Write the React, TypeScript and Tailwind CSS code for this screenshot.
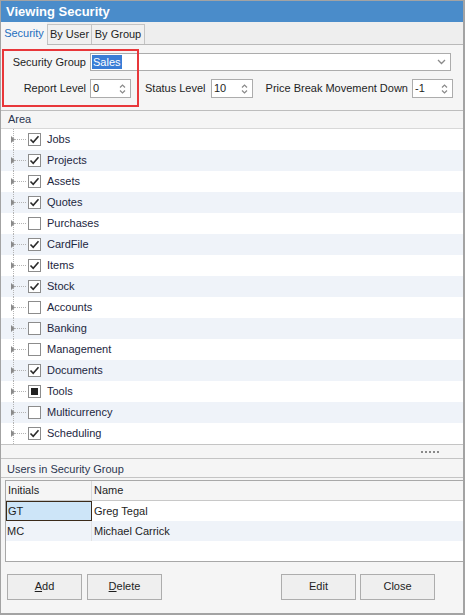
import React from 'react';

type CheckState = 'on' | 'off' | 'mixed';

const AREAS: { name: string; state: CheckState }[] = [
  { name: 'Jobs', state: 'on' },
  { name: 'Projects', state: 'on' },
  { name: 'Assets', state: 'on' },
  { name: 'Quotes', state: 'on' },
  { name: 'Purchases', state: 'off' },
  { name: 'CardFile', state: 'on' },
  { name: 'Items', state: 'on' },
  { name: 'Stock', state: 'on' },
  { name: 'Accounts', state: 'off' },
  { name: 'Banking', state: 'off' },
  { name: 'Management', state: 'off' },
  { name: 'Documents', state: 'on' },
  { name: 'Tools', state: 'mixed' },
  { name: 'Multicurrency', state: 'off' },
  { name: 'Scheduling', state: 'on' },
];

const USERS = [
  { initials: 'GT', name: 'Greg Tegal' },
  { initials: 'MC', name: 'Michael Carrick' },
];

const Spinner = ({ value, width }: { value: string; width: string }) => (
  <div className={`${width} h-[19px] shrink-0 bg-white border border-[#acacac] flex items-center justify-between pl-[2px] pr-[4px]`}>
    <span>{value}</span>
    <svg width="7" height="12" viewBox="0 0 7 12">
      <path d="M1 4.5 L3.5 2 L6 4.5" fill="none" stroke="#8a8a8a" strokeWidth="1.2" />
      <path d="M1 7.5 L3.5 10 L6 7.5" fill="none" stroke="#8a8a8a" strokeWidth="1.2" />
    </svg>
  </div>
);

const Check = ({ state }: { state: CheckState }) => (
  <div className="w-[13px] h-[13px] shrink-0 border border-[#8c8c8c] bg-white flex items-center justify-center">
    {state === 'on' && (
      <svg width="11" height="11" viewBox="0 0 11 11">
        <path d="M1.5 5.5 L4.2 8.3 L9.5 2.2" fill="none" stroke="#2b2b2b" strokeWidth="1.6" />
      </svg>
    )}
    {state === 'mixed' && <div className="w-[7px] h-[7px] bg-[#222]" />}
  </div>
);

const TreeRow = ({ name, state, alt }: { name: string; state: CheckState; alt: boolean }) => (
  <div className={`h-[21px] flex items-center ${alt ? 'bg-[#eff3f9]' : 'bg-white'}`}>
    <svg width="27" height="21" viewBox="0 0 27 21" className="shrink-0">
      <line x1="12.5" y1="0" x2="12.5" y2="21" stroke="#b4b4b4" strokeDasharray="1 1" />
      <line x1="14" y1="10.5" x2="26" y2="10.5" stroke="#b4b4b4" strokeDasharray="1 1" />
      <path d="M10 7 L14 10.5 L10 14 Z" fill="#8a8a8a" />
    </svg>
    <Check state={state} />
    <span className="ml-[6px] text-[#1c2640]">{name}</span>
  </div>
);

export default function App() {
  return (
    <div
      className="relative w-[465px] h-[615px] bg-[#f5f5f5] border-t border-l border-r-2 border-b-2 border-[#a3a3a3] flex flex-col text-[11px] text-[#1e1e1e] overflow-hidden whitespace-nowrap"
      style={{ fontFamily: '"Liberation Sans", Arial, sans-serif' }}
    >
      {/* title bar */}
      <div className="h-[21px] bg-[#4a8cca] text-white font-bold text-[13px] flex items-center pl-[5px] shrink-0">
        Viewing Security
      </div>

      {/* tabs */}
      <div className="h-[23px] bg-[#eeeeee] border-b border-[#b9b9b9] flex items-end shrink-0">
        <div className="w-[46px] h-[23px] flex items-center justify-center bg-[#f5f5f5] text-[#1f6fbf] -mb-px">Security</div>
        <div className="w-[45px] h-[20px] flex items-center justify-center border border-b-0 border-[#c4c4c4] bg-[#f0f0f0]">By User</div>
        <div className="w-[53px] h-[20px] flex items-center justify-center border border-b-0 border-l-0 border-[#c4c4c4] bg-[#f0f0f0]">By Group</div>
      </div>

      {/* form */}
      <div className="h-[65px] flex flex-col gap-[8px] pt-[8px] shrink-0">
        <div className="flex items-center">
          <div className="w-[89px] text-right pr-[4px] shrink-0">Security Group</div>
          <div className="w-[361px] h-[18px] bg-white border border-[#acacac] flex items-center justify-between pl-px pr-[4px]">
            <span className="bg-[#3a7dd6] text-white px-px leading-[14px]">Sales</span>
            <svg width="9" height="6" viewBox="0 0 9 6">
              <path d="M1 1 L4.5 4.5 L8 1" fill="none" stroke="#8a8a8a" strokeWidth="1.3" />
            </svg>
          </div>
        </div>
        <div className="flex items-center">
          <div className="w-[89px] text-right pr-[4px] shrink-0">Report Level</div>
          <Spinner value="0" width="w-[41px]" />
          <div className="w-[80px] pl-[14px] shrink-0">Status Level</div>
          <Spinner value="10" width="w-[42px]" />
          <div className="w-[159px] text-right pr-[4px] shrink-0">Price Break Movement Down</div>
          <Spinner value="-1" width="w-[41px]" />
        </div>
      </div>

      {/* red highlight */}
      <div className="absolute left-[1px] top-[48px] w-[137px] h-[58px] border-2 border-[#e8373a] pointer-events-none" />

      {/* area tree */}
      <div className="border-t border-[#bdbdbd] shrink-0">
        <div className="h-[18px] flex items-center pl-[7px] text-[#2c3550] border-b border-[#d8d8d8]">Area</div>
        <div className="bg-white">
          {AREAS.map((a, i) => (
            <TreeRow key={a.name} name={a.name} state={a.state} alt={i % 2 === 1} />
          ))}
        </div>
      </div>

      {/* splitter strip */}
      <div className="h-[15px] border-t border-b border-[#c4c4c4] flex items-center justify-end pr-[24px] shrink-0">
        <div className="flex gap-[2px]">
          {[0, 1, 2, 3, 4].map((d) => (
            <div key={d} className="w-[2px] h-[2px] bg-[#8a8a8a]" />
          ))}
        </div>
      </div>

      {/* users in group */}
      <div className="h-[19px] flex items-center pt-[3px] pl-[6px] text-[#2c3550] border-b border-[#c4c4c4] shrink-0">
        Users in Security Group
      </div>
      <div className="ml-[4px] mt-[2px] h-[82px] border-t border-l border-b border-[#a8a8a8] bg-white flex flex-col shrink-0">
        <div className="h-[20px] flex bg-[#f5f5f5] border-b border-[#c8c8c8]">
          <div className="w-[86px] pl-[2px] flex items-center border-r border-[#d8d8d8]">Initials</div>
          <div className="pl-[2px] flex items-center">Name</div>
        </div>
        {USERS.map((u, i) => (
          <div key={u.initials} className={`h-[20px] flex ${i % 2 === 1 ? 'bg-[#eff3f9]' : 'bg-white'}`}>
            <div
              className={`w-[86px] pl-[1px] flex items-center border-r ${
                i === 0 ? 'bg-[#cde5f8] border border-[#3a2a1a]' : 'border-[#e2e2e2]'
              }`}
            >
              {u.initials}
            </div>
            <div className="pl-[2px] flex items-center">{u.name}</div>
          </div>
        ))}
      </div>

      {/* buttons */}
      <div className="flex-1 flex items-center pl-[6px] pb-[2px]">
        <button className="w-[75px] h-[26px] bg-[#efefef] border border-[#adadad]">
          <span className="underline">A</span>dd
        </button>
        <button className="ml-[5px] w-[75px] h-[26px] bg-[#efefef] border border-[#adadad]">
          <span className="underline">D</span>elete
        </button>
        <button className="ml-[119px] w-[75px] h-[26px] bg-[#efefef] border border-[#adadad]">Edit</button>
        <button className="ml-[4px] w-[75px] h-[26px] bg-[#efefef] border border-[#adadad]">Close</button>
      </div>
    </div>
  );
}
